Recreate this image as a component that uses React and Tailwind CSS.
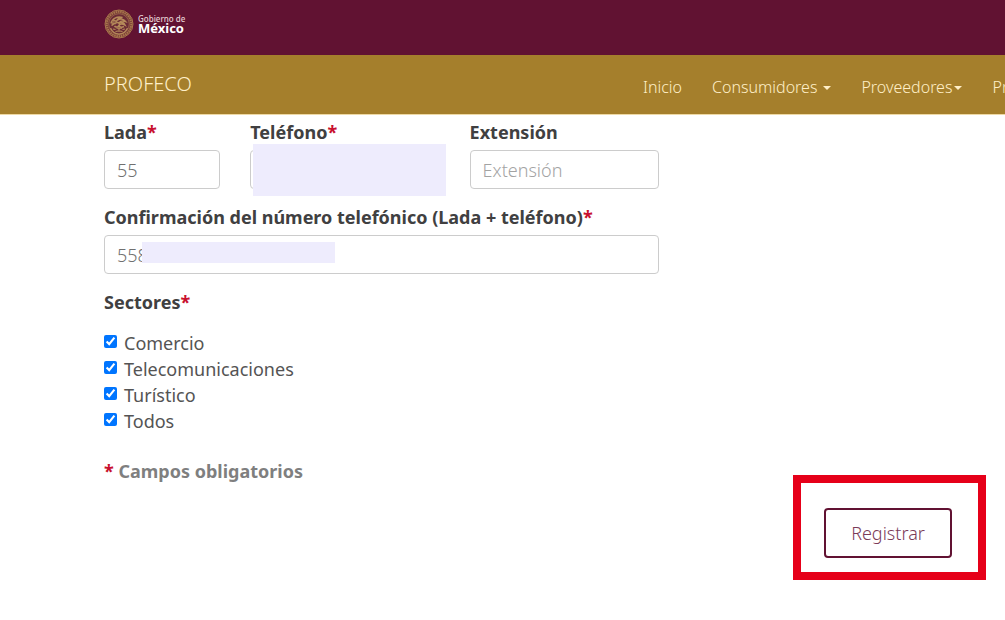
import { useState } from "react";

const SECTORS = ["Comercio", "Telecomunicaciones", "Turístico", "Todos"];

const NAV_ITEMS = [
  { label: "Inicio" },
  { label: "Consumidores", menu: true, space: true },
  { label: "Proveedores", menu: true },
  { label: "Programas", menu: true },
];

const inputClass =
  "block h-[39px] w-full rounded border border-[#ccc] bg-white px-3 text-lg font-light text-[#707070] outline-none placeholder:text-[#a3a3a3]";

function Required() {
  return <span className="text-[#c8102e]">*</span>;
}

function Field({ id, label, required, cover, ...props }) {
  return (
    <div className="relative">
      <label
        htmlFor={id}
        className="mb-[5px] block text-lg leading-[26px] font-bold text-[#404041]"
      >
        {label}
        {required && <Required />}
      </label>
      <input id={id} type="text" className={inputClass} {...props} />
      {cover && <span className={`absolute bg-[#eeecfd] ${cover}`} />}
    </div>
  );
}

function Seal() {
  return (
    <svg viewBox="0 0 60 60" className="size-[30px]" fill="none" stroke="#b58a5a">
      <circle cx="30" cy="30" r="28" strokeWidth="2" fill="#7a3c38" stroke="#a8774c" />
      <circle cx="30" cy="30" r="24.5" strokeWidth="4" strokeDasharray="3 1.5" stroke="#a8774c" />
      <circle cx="30" cy="30" r="20.5" strokeWidth="1" fill="#6b2a35" />
      {/* wings */}
      <path d="M14 29c2-10 12-15 23-12-7 0-10 3-11 6 6-4 13-3 17 2-6-2-10-1-12 2 5-1 9 1 11 5-5-3-9-3-12 0" strokeWidth="3" />
      <path d="M15 33c4-3 7-6 12-6 3 0 5 2 4 5-2 5-8 5-10 2M17 24c3-1 6-1 9 1M16 28l8 1M28 33c3 3 8 4 12 2" strokeWidth="3" />
      {/* laurel */}
      <path d="M13 38c4 9 11 12 17 12s13-3 17-12M18 40l5 1M23 45l5-1M42 40l-5 1M37 45l-5-1M30 38v8M25 38h11" strokeWidth="2.5" />
    </svg>
  );
}

function Caret({ space }) {
  return (
    <svg viewBox="0 0 8 4" className={`mt-0.5 h-1 w-2 ${space ? "ml-1.5" : "ml-0.5"}`} fill="currentColor">
      <path d="M0 0h8L4 4z" />
    </svg>
  );
}

function App() {
  const [checked, setChecked] = useState(SECTORS);

  const toggle = (name) => {
    setChecked((prev) =>
      prev.includes(name) ? prev.filter((s) => s !== name) : [...prev, name]
    );
  };

  return (
    <div className="min-h-screen overflow-x-hidden bg-white font-['Noto_Sans','Open_Sans',sans-serif]">
      <header>
        <div className="flex h-[55px] items-center bg-[#611232] pb-[7px] pl-[104px]">
          <a href="#gob" className="flex items-center gap-1 text-white">
            <Seal />
            <span className="flex flex-col">
              <span className="text-[8px] leading-[9px] font-medium text-[#e6d0d4]">Gobierno de</span>
              <span className="text-[13px] leading-[11px] font-bold">México</span>
            </span>
          </a>
        </div>
        <nav className="flex h-[60px] items-center border-b border-[#eed9a5] bg-[#a57f2c] pl-[104px] text-[#ffefc8]">
          <a href="#profeco" className="mb-0.5 grow text-xl font-light">
            PROFECO
          </a>
          <ul className="mt-1 flex w-[362px] shrink-0 gap-[30px] overflow-hidden text-base font-light">
            {NAV_ITEMS.map(({ label, menu, space }) => (
              <li key={label} className="shrink-0">
                <a href={`#${label.toLowerCase()}`} className="flex items-center">
                  {label}
                  {menu && <Caret space={space} />}
                </a>
              </li>
            ))}
          </ul>
        </nav>
      </header>

      <form className="pt-1 pr-[53px] pl-[104px]" onSubmit={(e) => e.preventDefault()}>
        <div className="flex max-w-[555px] flex-col gap-[15px]">
          <div className="grid grid-cols-[116fr_189fr_189fr] gap-[30px]">
            <Field id="lada" label="Lada" required defaultValue="55" />
            <Field
              id="telefono"
              label="Teléfono"
              required
              cover="top-[25px] left-[3px] h-[52px] w-[193px]"
            />
            <Field id="extension" label="Extensión" placeholder="Extensión" />
          </div>
          <Field
            id="confirmacion"
            label="Confirmación del número telefónico (Lada + teléfono)"
            required
            defaultValue="558"
            cover="top-[38px] left-[38px] h-[21px] w-[193px]"
          />
          <fieldset>
            <legend className="mb-[15px] text-lg leading-[26px] font-bold text-[#404041]">
              Sectores
              <Required />
            </legend>
            {SECTORS.map((name) => (
              <label
                key={name}
                className="flex items-center gap-[7px] text-lg leading-[26px] text-[#545454]"
              >
                <input
                  type="checkbox"
                  className="mb-1 size-[13px] accent-[#0075ff]"
                  checked={checked.includes(name)}
                  onChange={() => toggle(name)}
                />
                {name}
              </label>
            ))}
          </fieldset>
        </div>

        <p className="mt-6 text-lg leading-[26px] font-bold text-[#7f7f7f]">
          <Required /> Campos obligatorios
        </p>

        <div className="mt-6 flex justify-end">
          <div className="relative">
            <button
              type="submit"
              className="h-[50px] w-32 rounded border-2 border-[#611232] bg-white text-lg font-light text-[#7b3a58]"
            >
              Registrar
            </button>
            <span className="pointer-events-none absolute -top-[33px] -right-[34px] -bottom-[22px] -left-[31px] border-8 border-[#e60019]" />
          </div>
        </div>
      </form>
    </div>
  );
}

export default App;
